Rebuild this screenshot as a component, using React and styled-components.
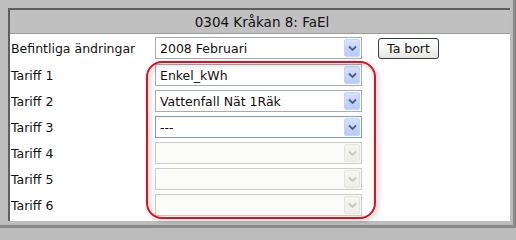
import React from "react";
import styled, { createGlobalStyle } from "styled-components";

const Global = createGlobalStyle`
  html, body { margin: 0; padding: 0; background: #bcbcbc; width: 516px; height: 228px; overflow: hidden; }
  body { font-family: "DejaVu Sans", Verdana, sans-serif; }
`;

const Frame = styled.div`
  position: relative;
  width: 516px;
  height: 228px;
  box-sizing: border-box;
  background: #bdbdbd;
  padding: 8px 3px 4px 8px;
  border-right: 3px solid #8a8a8a;
  border-bottom: 3px solid #8a8a8a;
`;

const Window = styled.div`
  height: 100%;
  box-sizing: border-box;
  background: #ffffff;
  border-top: 2px solid #5f5f5f;
  border-left: 2px solid #5f5f5f;
  display: flex;
  flex-direction: column;
`;

const Header = styled.div`
  height: 24px;
  flex: none;
  box-sizing: border-box;
  background: #c0c0c0;
  border-bottom: 1px solid #9a9a9a;
  display: flex;
  align-items: center;
  justify-content: center;
  font-size: 13.5px;
  color: #111;
  padding-left: 4px;
`;

const Row = styled.div`
  display: grid;
  flex: none;
  grid-template-columns: 145px 207px 16px auto;
  align-items: center;
  height: ${(p) => p.$h}px;
`;

const Label = styled.div`
  font-size: 12.5px;
  color: #111;
  padding-left: 1px;
  white-space: nowrap;
`;

const Combo = styled.div`
  height: 22px;
  box-sizing: border-box;
  border: 1px solid ${(p) => (p.$disabled ? "#cfcdc0" : p.$focus ? "#7f9db9" : "#a5acb2")};
  background: ${(p) => (p.$disabled ? "#fbfbf9" : "#fff")};
  display: flex;
  align-items: center;
  padding: 1px;
`;

const Value = styled.div`
  flex: 1;
  font-size: 12.5px;
  color: #111;
  padding-left: 3px;
  white-space: nowrap;
  overflow: hidden;
`;

const Arrow = styled.div`
  width: 16px;
  height: 100%;
  box-sizing: border-box;
  border-radius: 2px;
  display: flex;
  align-items: center;
  justify-content: center;
  border: 1px solid ${(p) => (p.$disabled ? "#e6e5dd" : "#c3d3fd")};
  background: ${(p) =>
    p.$disabled
      ? "linear-gradient(#f5f5f1, #eeeee8)"
      : "linear-gradient(#d5e1fc, #b7cbf8)"};
`;

const Button = styled.div`
  width: 61px;
  height: 21px;
  box-sizing: border-box;
  border: 1px solid #2e3b4e;
  border-radius: 3px;
  background: linear-gradient(#ffffff, #f3f3ee 60%, #e6e5de);
  font-size: 12.5px;
  color: #111;
  display: flex;
  align-items: center;
  justify-content: center;
`;

const Highlight = styled.div`
  position: absolute;
  left: 146px;
  top: 61px;
  width: 230px;
  height: 158px;
  box-sizing: border-box;
  border: 2px solid #e0101c;
  border-radius: 16px;
  filter: drop-shadow(2px 2px 2px rgba(0, 0, 0, 0.28));
  pointer-events: none;
`;

function Chevron({ disabled }) {
  return (
    <svg width="9" height="7" viewBox="0 0 9 7">
      <path
        d="M1 1.5 L4.5 5 L8 1.5"
        fill="none"
        stroke={disabled ? "#c8c8bf" : "#4d6185"}
        strokeWidth="1.8"
      />
    </svg>
  );
}

function Select({ value, disabled, focus }) {
  return (
    <Combo $disabled={disabled} $focus={focus}>
      <Value>{value}</Value>
      <Arrow $disabled={disabled}>
        <Chevron disabled={disabled} />
      </Arrow>
    </Combo>
  );
}

const tariffs = [
  { label: "Tariff 1", value: "Enkel_kWh" },
  { label: "Tariff 2", value: "Vattenfall Nät 1Räk" },
  { label: "Tariff 3", value: "---", focus: true },
  { label: "Tariff 4", value: "", disabled: true },
  { label: "Tariff 5", value: "", disabled: true },
  { label: "Tariff 6", value: "", disabled: true },
];

export default function App() {
  return (
    <>
      <Global />
      <Frame>
        <Window>
          <Header>0304 Kråkan 8: FaEl</Header>
          <Row $h={28}>
            <Label>Befintliga ändringar</Label>
            <Select value="2008 Februari" />
            <span />
            <Button>Ta bort</Button>
          </Row>
          {tariffs.map((t) => (
            <Row $h={26} key={t.label}>
              <Label>{t.label}</Label>
              <Select value={t.value} disabled={t.disabled} focus={t.focus} />
            </Row>
          ))}
        </Window>
        <Highlight />
      </Frame>
    </>
  );
}
